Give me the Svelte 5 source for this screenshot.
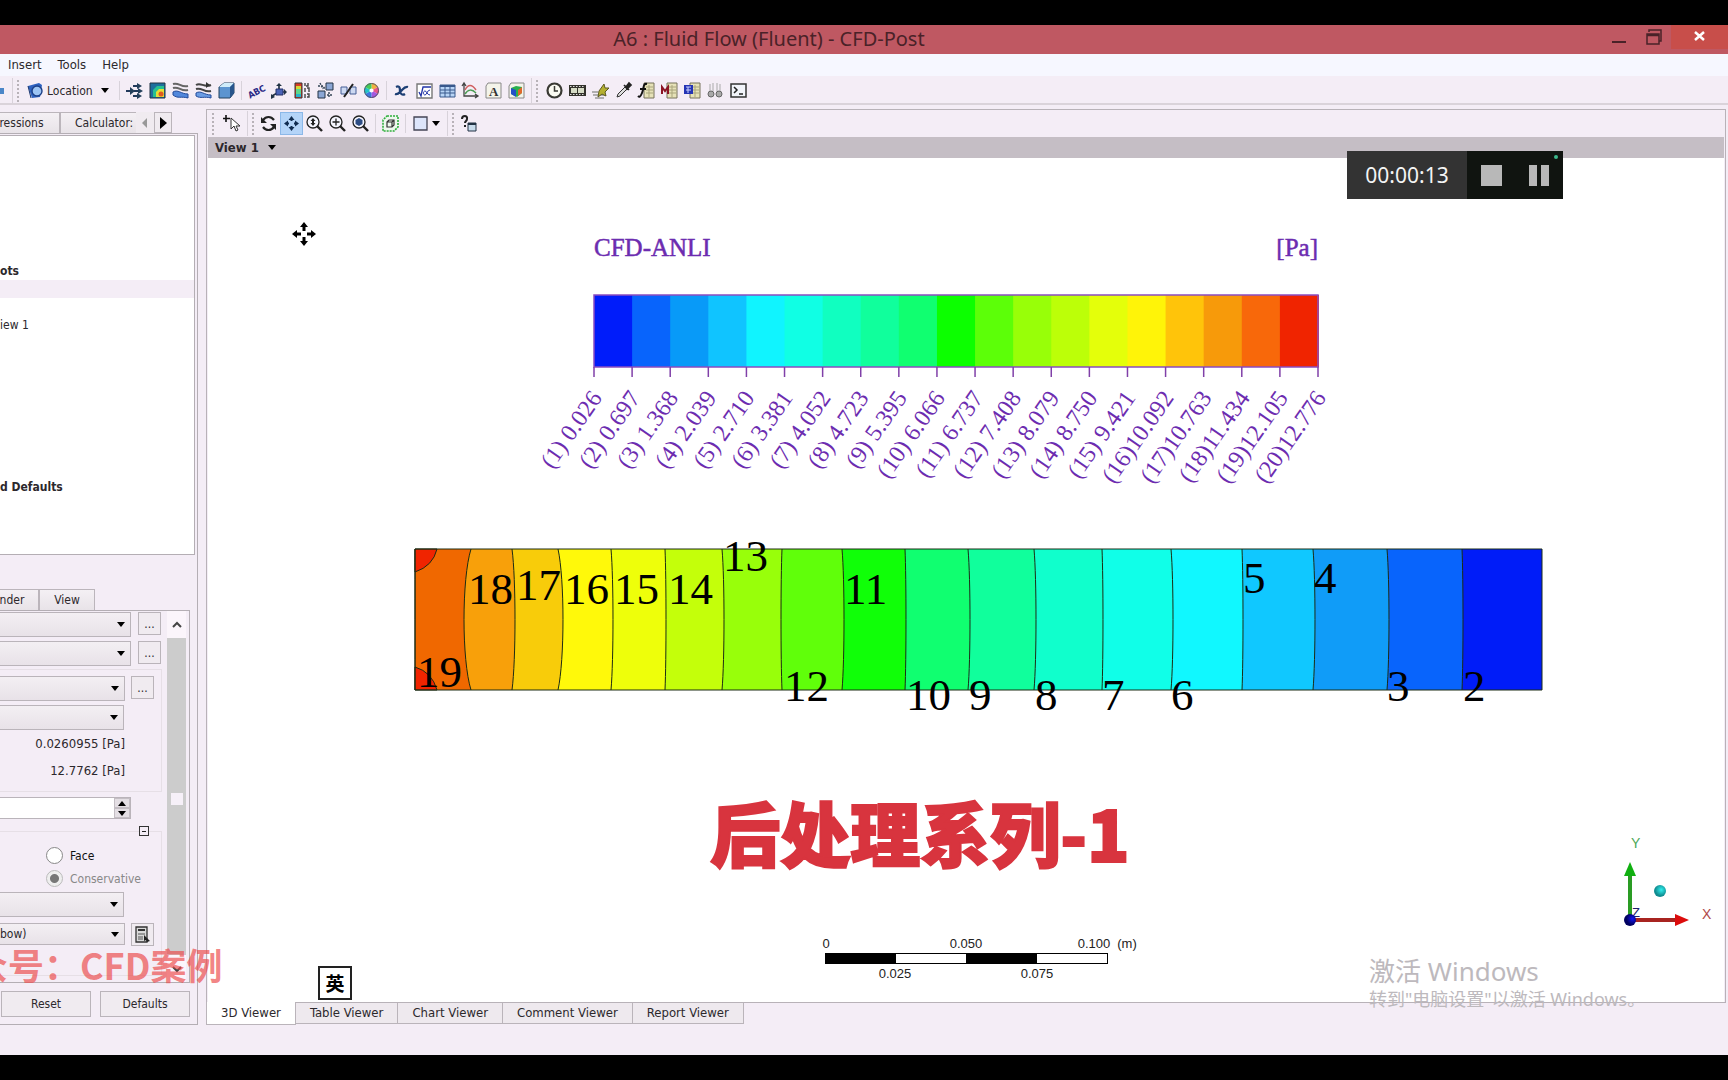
<script>
  const legendColors = [
    '#001cfa', '#0864fc', '#089af8', '#10c4ff', '#10f4ff', '#10ffe4', '#10ffc0', '#10ff9c', '#10ff70', '#0cff00',
    '#5cff08', '#98ff08', '#bcff08', '#e4ff0a', '#fff408', '#ffc40a', '#f79a0a', '#f8680a', '#f02400'
  ];
  const legendLabels = [
    '(1) 0.026', '(2) 0.697', '(3) 1.368', '(4) 2.039', '(5) 2.710', '(6) 3.381', '(7) 4.052', '(8) 4.723',
    '(9) 5.395', '(10) 6.066', '(11) 6.737', '(12) 7.408', '(13) 8.079', '(14) 8.750', '(15) 9.421',
    '(16)10.092', '(17)10.763', '(18)11.434', '(19)12.105', '(20)12.776'
  ];
  const legendX = 386;
  const legendStep = 724 / 19;

  // Duct section: each band runs from its own iso-line to the right wall and is overlaid by the next.
  const top = 391;
  const bottom = 532;
  const right = 1334;
  const bands = [
    { x: 207, mid: 207, color: '#f06800' },
    { x: 263, mid: 256, color: '#f8a00a' },
    { x: 304, mid: 307, color: '#f8cc0a' },
    { x: 350, mid: 355, color: '#fff90a' },
    { x: 403, mid: 405, color: '#eeff0a' },
    { x: 457, mid: 458, color: '#c4ff0a' },
    { x: 514, mid: 516, color: '#98ff0a' },
    { x: 574, mid: 573, color: '#60ff0a' },
    { x: 634, mid: 636, color: '#10ff08' },
    { x: 697, mid: 698, color: '#10ff70' },
    { x: 760, mid: 762, color: '#10ff9c' },
    { x: 826, mid: 828, color: '#10ffcc' },
    { x: 894, mid: 895, color: '#10ffe8' },
    { x: 963, mid: 965, color: '#10f8ff' },
    { x: 1034, mid: 1035, color: '#10c8ff' },
    { x: 1105, mid: 1107, color: '#109cf8' },
    { x: 1179, mid: 1181, color: '#0864fc' },
    { x: 1254, mid: 1255, color: '#001cf8' }
  ];
  const isoLine = (b) => {
    const c = (b.mid - b.x / 4) / 0.75;
    return `M${b.x} ${top}C${c} ${top + 30} ${c} ${bottom - 30} ${b.x} ${bottom}`;
  };
  const numbers = [
    ['19', 209, 529], ['18', 260, 446], ['17', 308, 442], ['16', 356, 446], ['15', 406, 446], ['14', 460, 446],
    ['13', 515, 413], ['12', 576, 543], ['11', 636, 446], ['10', 698, 552], ['9', 761, 552], ['8', 827, 552],
    ['7', 894, 552], ['6', 963, 552], ['5', 1035, 435], ['4', 1106, 435], ['3', 1179, 543], ['2', 1255, 543]
  ];

  const page = '<path d="M3 1h13v15H1V4z" fill="#f4f4ea" stroke="#888"/>';
  const sheet = '<path d="M6 1h10v15H6z" fill="#e6e2b8" stroke="#77735a"/><path d="M8 5h7M8 8h7M8 11h7M11 3v12" stroke="#a9a57c"/>';
  const lens = '<circle cx="7" cy="7" r="6" fill="#f6f6ff" stroke="#222" stroke-width="1.3"/><path d="M11 11l5 5" stroke="#222" stroke-width="2.4"/>';
  const icons = {
    location: '<path d="M1 4l11-3 3 2-2 12-8 1z" fill="#2e62c0"/><path d="M1 4l3 12" stroke="#17346e"/><circle cx="10" cy="9" r="5" fill="#9cc4f4" stroke="#1c3f86" stroke-width="1.4"/>',
    vector: '<path d="M0 9h5M7 4h5M8 9h5M7 14h5" stroke="#223a5c" stroke-width="1.800"/><path d="M4 5l5 4-5 4zM11 1l5 3-5 3zM12 6l5 3-5 3zM11 11l5 3-5 3z" fill="#24405c"/>',
    contour: '<path d="M1 1h15v15H1z" fill="#1d6f9c" stroke="#234"/><path d="M4 15V8l4-4h7v11z" fill="#27c190"/><path d="M7 15v-5l3-3h5v8z" fill="#e6df36"/><circle cx="12" cy="12" r="2.500" fill="#e05a20"/>',
    stream: '<path d="M1 2c6-2 8 4 15 2M1 6c6-2 8 4 15 2" stroke="#666" stroke-width="2" fill="none"/><path d="M1 10c5-3 8 2 15 2v4C9 14 6 17 1 13z" fill="#5288dc" stroke="#234b9a"/>',
    track: '<path d="M1 3c5-3 8 3 15 0M1 7c6-2 8 4 15 2" stroke="#444" stroke-width="2" fill="none"/><path d="M11 0l4 3-4 3z" fill="#333"/><path d="M1 11c5-3 8 2 15 2v3C9 14 6 17 1 14z" fill="#6a9ce4" stroke="#234b9a"/>',
    volume: '<path d="M1 5l5-4h10v10l-4 5H1z" fill="#5c94d0" stroke="#24435f"/><path d="M1 5l5-4h10l-4 4z" fill="#d0ecfa"/><path d="M12 5l4-4v10l-4 5z" fill="#28558c"/>',
    abc: '<text x="-1" y="13" transform="rotate(-28 8 9)" font-size="9" font-weight="700" font-family="DejaVu Sans Condensed, sans-serif" fill="#2a2a86">ABC</text>',
    axis: '<path d="M8 2v8M8 10h7M8 10l-7 4" stroke="#234" stroke-width="1.700"/><path d="M5 7h7v6H5z" fill="#4b63b8" stroke="#223068"/><path d="M5 4l3-3 3 3zM13 7l3 3-3 3zM0 12l4 3-4 2z" fill="#234"/>',
    legend: '<path d="M1 1h7v15H1z" fill="#d83a24" stroke="#333"/><path d="M2 4h5v4H2z" fill="#d6d836"/><path d="M2 7h5v5H2z" fill="#5cd88c"/><path d="M2 12h5v3H2z" fill="#24b4cc"/><path d="M11 1v3M14 1v3h-2M11 6v4M13 6h2v4M11 12v4M13 12h2v3h-2" stroke="#444" fill="none" stroke-width="1.400"/>',
    instance: '<path d="M9 1h7v7H9z" fill="#8ba6d4" stroke="#234"/><path d="M1 9h7v7H1z" fill="#8ba6d4" stroke="#234"/><path d="M1 4h5l2 3M3 1l3 6M10 13h5M12 10v5" stroke="#345" stroke-width="1.400" fill="none" stroke-dasharray="2 1"/>',
    clip: '<path d="M1 5h6v7H1zM10 5h6v7h-6z" fill="#cdd9f2" stroke="#445c94"/><path d="M4 15L13 2" stroke="#222" stroke-width="2"/>',
    wheel: '<path d="M8.500 8.500V1A7.500 7.500 0 0 1 15 5z" fill="#f0b040"/><path d="M8.500 8.500L15 5a7.500 7.500 0 0 1 0 7z" fill="#e8568c"/><path d="M8.500 8.500L15 12a7.500 7.500 0 0 1-6.500 4z" fill="#a458e0"/><path d="M8.500 8.500V16A7.500 7.500 0 0 1 2 12z" fill="#3d78e0"/><path d="M8.500 8.500L2 12a7.500 7.500 0 0 1 0-7z" fill="#22c4c8"/><path d="M8.500 8.500L2 5a7.500 7.500 0 0 1 6.500-4z" fill="#46cc58"/><circle cx="8.500" cy="8.500" r="2" fill="#fff"/><circle cx="8.500" cy="8.500" r="7" fill="none" stroke="#556"/>',
    variable: '<path d="M3 5c4-2 4 2 4 4s2 5 5 3M15 5c-3-1-5 2-7 4s-3 4-6 3" stroke="#1d3f74" stroke-width="2.300" fill="none"/>',
    expression: '<path d="M1 2h15v14H1z" fill="#fff" stroke="#777" stroke-width="1.400"/><path d="M3 10l2 4 2-9h8" stroke="#2234a8" fill="none" stroke-width="1.300"/><path d="M14 8c-3 0-3 5-5 5-2 0-2-4 0-4 2 0 2 4 5 4" stroke="#2234a8" fill="none"/>',
    table: '<path d="M1 3h15v12H1z" fill="#b8d4f6" stroke="#39588c"/><path d="M1 4h15" stroke="#39588c" stroke-width="2"/><path d="M1 8h15M1 11h15M6 3v12M11 3v12" stroke="#39588c"/>',
    chart: '<path d="M2 1v13h14M0 4l2-3 2 3M13 12l3 2-3 2" stroke="#444" fill="none" stroke-width="1.300"/><path d="M3 8c3-6 7-6 11 0" stroke="#d06060" fill="none" stroke-width="1.500"/><path d="M3 12c3-5 7-5 11-1" stroke="#4c9c54" fill="none" stroke-width="1.500"/>',
    comment: page + '<text x="4" y="14" font-size="13" font-weight="700" font-family="Liberation Serif, serif" fill="#333">A</text>',
    figure: page + '<path d="M3 6l5-2 6 1v6l-5 4-6-3z" fill="#28b04c"/><path d="M3 6l5 2v7l-5-3z" fill="#2450c8"/><path d="M10 8l4-3v6l-4 3z" fill="#e0682c"/>',
    clock: '<circle cx="8.500" cy="8.500" r="7" fill="#fbfbf2" stroke="#3a3a34" stroke-width="2.200"/><path d="M8.500 4v5H12" stroke="#3a3a34" fill="none" stroke-width="1.500"/>',
    film: '<path d="M0 3h17v11H0z" fill="#33332c"/><path d="M2 6h6v5H2zM9 6h6v5H9z" fill="#d6dcc6"/><path d="M1 4.500h15M1 12.500h15" stroke="#ddd" stroke-dasharray="1.500 1.500"/>',
    quick: '<path d="M1 13h12M3 16h9M0 10h6" stroke="#999" stroke-width="1.500"/><path d="M7 9l5-7 1 4 4 0-4 4 1 4-4-2-4 3z" fill="#b5b030" stroke="#5c5a22"/>',
    probe: '<path d="M2 15l1-3 7-7 2 2-7 7z" fill="#ddd" stroke="#333"/><path d="M9 3l5 5M11 5l3-4 2 2-4 4z" stroke="#222" stroke-width="1.700" fill="#222"/>',
    func: sheet + '<path d="M9 2C5 1 6 6 4 11S1 15 0 14M2 7h6" stroke="#111" stroke-width="2" fill="none"/>',
    macro: sheet + '<path d="M1 12V5l3 4 3-4v7" stroke="#8c1424" stroke-width="2" fill="none"/>',
    report: sheet + '<path d="M0 3h9v9H0z" fill="#2434b4"/><path d="M2 5h5M2 8h5M4 5v6" stroke="#c8d0ff"/>',
    compare: '<circle cx="4" cy="12" r="3" fill="#aaa" stroke="#666"/><circle cx="12" cy="12" r="3" fill="#aaa" stroke="#666"/><path d="M3 2v7M6 1v8M10 1v8M13 2v7" stroke="#aaa"/>',
    console: '<path d="M1 2h15v13H1z" fill="#f2f4fa" stroke="#333" stroke-width="1.500"/><path d="M4 5l3 3-3 3M9 12h4" stroke="#222" fill="none" stroke-width="1.500"/>',
    pick: '<path d="M3 0v7M0 3.500h7" stroke="#111" stroke-width="1.600"/><path d="M8 3v11l3-3 2 5 2-1-2-4h4z" fill="#fff" stroke="#333"/>',
    rotate: '<path d="M3 5c3-4 8-4 11 0M14 12c-3 4-8 4-11 0" stroke="#222" stroke-width="2.200" fill="none"/><path d="M1 2v6h6zM16 15V9h-6z" fill="#222"/>',
    pan: '<path d="M8.500 3v3M8.500 11v3M3 8.500h3M11 8.500h3" stroke="#112c50" stroke-width="2"/><path d="M5.500 5l3-4 3 4zM5.500 12l3 4 3-4zM5 5.500l-4 3 4 3zM12 5.500l4 3-4 3z" fill="#112c50"/>',
    zoom: lens + '<path d="M4.500 6L7 3l2.500 3zM4.500 8L7 11l2.500-3z" fill="#222"/><path d="M7 5v4" stroke="#222" stroke-width="2"/>',
    zoomIn: lens + '<path d="M3.500 7h7M7 3.500v7" stroke="#222" stroke-width="1.300"/>',
    zoomBox: lens + '<path d="M3.500 5L7 3l3.500 2v4L7 11 3.500 9z" fill="#2d4c84"/>',
    fit: '<path d="M5 1h11v11l-4 4H1V5z" fill="#eef8ee" stroke="#2fae3c" stroke-width="1.600" stroke-dasharray="2 1"/><path d="M5 7l2-2h5v5l-2 2H5zM5 7h5v5M10 7l2-2" fill="none" stroke="#333" stroke-width="1.200"/>',
    square: '<path d="M2 2h13v13H2z" fill="#dde5fb" stroke="#445" stroke-width="1.300"/>',
    help: '<path d="M2 4c0-4 6-4 5 0 0 2-2 2-2 4M5 10v2" stroke="#222" stroke-width="2" fill="none"/><path d="M8 8h8v8H8z" fill="#c8dcec" stroke="#234"/><path d="M8 9h8" stroke="#234" stroke-width="2"/>',
    calc: '<path d="M2 1h11v15H2z" fill="#d9d9d9" stroke="#333" stroke-width="1.300"/><path d="M4 4h7" stroke="#333" stroke-width="2"/><path d="M4 8h7M4 11h5M4 13h5" stroke="#555"/><path d="M10 9v6l2-1 1 2 3-1-3-3z" fill="#222"/>'
  };

  const insertTools = [
    ['vector', 'contour', 'stream', 'track', 'volume'],
    ['abc', 'axis', 'legend', 'instance', 'clip', 'wheel'],
    ['variable', 'expression', 'table', 'chart', 'comment', 'figure']
  ];
  const extraTools = ['clock', 'film', 'quick', 'probe', 'func', 'macro', 'report', 'compare', 'console'];
  const tree = Array.from({ length: 20 }, () => ({ text: '' }));
  tree[7] = { text: 'ots', bold: true };
  tree[8] = { text: '', selected: true };
  tree[10] = { text: 'iew 1' };
  tree[19] = { text: 'd Defaults', bold: true };
  const viewerTabs = ['3D Viewer', 'Table Viewer', 'Chart Viewer', 'Comment Viewer', 'Report Viewer'];
</script>

{#snippet icon(name)}
  <svg class="icon" viewBox="0 0 17 17" aria-hidden="true">{@html icons[name]}</svg>
{/snippet}

{#snippet tool(name, active = false)}
  <button class="tool" class:active aria-label={name}>{@render icon(name)}</button>
{/snippet}

{#snippet combo(label, value = '')}
  <span class="combo"><select aria-label={label}><option>{value}</option></select></span>
{/snippet}

<div class="screen">
  <header class="title">
    <h1>A6 : Fluid Flow (Fluent) - CFD-Post</h1>
    <div class="window-buttons">
      <button aria-label="Minimize"><svg viewBox="0 0 16 16"><path d="M1 13h14" stroke="#4a2228" stroke-width="2" /></svg></button>
      <button aria-label="Restore"><svg viewBox="0 0 16 16"><path d="M1 5h12v10H1zM1 6.500h12M3 3V1h12v11h-2" fill="none" stroke="#4a2228" stroke-width="1.500" /></svg></button>
      <button class="close" aria-label="Close"><svg viewBox="0 0 16 16"><path d="M3 3l9 8M12 3l-9 8" stroke="#fff" stroke-width="2.500" /></svg></button>
    </div>
  </header>

  <nav class="menu">
    <button>Insert</button><button>Tools</button><button>Help</button>
  </nav>

  <div class="toolbar">
    <span class="undo"></span>
    <i class="sep tall"></i><i class="grip"></i>
    <button class="location">{@render icon('location')}<span>Location</span><i class="down"></i></button>
    {#each insertTools as group}
      <i class="sep"></i>
      {#each group as name}{@render tool(name)}{/each}
    {/each}
    <i class="sep tall"></i><i class="grip wide"></i>
    {#each extraTools as name}{@render tool(name)}{/each}
  </div>

  <main>
    <aside>
      <div class="tabs outline-tabs">
        <button class="tab first">ressions</button>
        <button class="tab calculators">Calculator:</button>
        <button class="scroll-tab" aria-label="Previous tabs"><svg viewBox="0 0 16 16"><path d="M10 3v10L5 8z" fill="#999" /></svg></button>
        <button class="scroll-tab next" aria-label="Next tabs"><svg viewBox="0 0 16 16"><path d="M5 2v12l7-6z" fill="#000" /></svg></button>
      </div>
      <div class="panel">
        <ul class="tree">
          {#each tree as row}
            <li class:bold={row.bold} class:selected={row.selected}>{row.text}</li>
          {/each}
        </ul>

        <div class="tabs detail-tabs">
          <button class="tab render">nder</button>
          <button class="tab view">View</button>
        </div>
        <div class="details">
          <div class="form">
            <div class="row">{@render combo('Domains')}<button class="more">...</button></div>
            <div class="row">{@render combo('Locations')}<button class="more">...</button></div>
            <div class="group">
              <div class="row">{@render combo('Variable')}<button class="more">...</button></div>
              <div class="row short">{@render combo('Range')}</div>
              <p>0.0260955 [Pa]</p>
              <p>12.7762 [Pa]</p>
            </div>
            <div class="spin">
              <input aria-label="Number of contours" />
              <div class="spin-buttons"><button aria-label="Increase"><i class="up"></i></button><button aria-label="Decrease"><i class="down"></i></button></div>
            </div>
            <div class="group advanced">
              <button class="collapse" aria-label="Collapse"></button>
              <label><input type="radio" name="boundary" />Face</label>
              <label class="disabled"><input type="radio" name="values" checked disabled />Conservative</label>
              <div class="row short">{@render combo('Color scale')}</div>
              <div class="row low">{@render combo('Color map', 'bow)')}<button class="more image" aria-label="Edit color map">{@render icon('calc')}</button></div>
            </div>
          </div>
          <div class="scrollbar">
            <button aria-label="Scroll up"><svg viewBox="0 0 16 16"><path d="M4 10l4-4 4 4" fill="none" stroke="#444" stroke-width="2" /></svg></button>
            <div class="track"><i></i></div>
            <button aria-label="Scroll down"><svg viewBox="0 0 16 16"><path d="M4 6l4 4 4-4" fill="none" stroke="#444" stroke-width="2" /></svg></button>
          </div>
        </div>
        <div class="actions"><button>Reset</button><button>Defaults</button></div>
        <div class="watermark">众号：CFD案例</div>
      </div>
    </aside>

    <section class="viewer">
      <div class="frame">
        <div class="view-tools">
          <i class="grip"></i><span class="pad">{@render tool('pick')}</span>
          <i class="sep tall"></i><i class="grip"></i>
          {@render tool('rotate')}{@render tool('pan', true)}{@render tool('zoom')}{@render tool('zoomIn')}{@render tool('zoomBox')}
          <i class="sep"></i>{@render tool('fit')}<i class="sep"></i>
          {@render tool('square')}<i class="down spaced"></i>
          <i class="sep tall"></i><i class="grip"></i>{@render tool('help')}
        </div>
        <button class="view-bar">View 1<i class="down"></i></button>
        <div class="scene">
          <svg class="plot" viewBox="0 0 1516 844" role="img" aria-label="Pressure contour">
            <g class="legend">
              <text class="heading" x="386" y="98">CFD-ANLI</text>
              <text class="heading" x="1110" y="98" text-anchor="end">[Pa]</text>
              {#each legendColors as color, i}
                <rect x={legendX + i * legendStep} y="137" width={legendStep + 1} height="72" fill={color} />
              {/each}
              <rect x="386" y="137" width="724" height="72" fill="none" stroke="#8a4cc0" stroke-width="1.500" />
              {#each legendLabels as label, i}
                <path d="M{legendX + i * legendStep} 209v10" stroke="#8040a8" stroke-width="1.500" />
                <text text-anchor="end" transform="translate({legendX + 9 + i * legendStep} 240) rotate(-55)">{label}</text>
              {/each}
            </g>

            <g class="duct">
              {#each bands as band}
                <path d="{isoLine(band)}H{right}V{top}Z" fill={band.color} />
                <path class="line" d={isoLine(band)} />
              {/each}
              <path class="line hot" d="M207 391H229Q225 408 207 414Z" />
              <path class="line hot" d="M207 532H229Q224 514 207 509Z" />
              <path class="line" d="M207 391H1334V532H207Z" />
              {#each numbers as [n, x, y]}
                <text {x} {y}>{n}</text>
              {/each}
            </g>

            <g class="scale">
              <rect x="617.500" y="795.500" width="282" height="10" fill="#fff" stroke="#000" />
              <path d="M617 795h71v11h-71zM758 795h71v11h-71z" />
              <text x="618" y="790">0</text>
              <text x="758" y="790">0.050</text>
              <text x="886" y="790">0.100</text>
              <text x="919" y="790">(m)</text>
              <text x="687" y="820">0.025</text>
              <text x="829" y="820">0.075</text>
            </g>

            <g class="triad">
              <defs>
                <radialGradient id="cyan-ball" cx=".6" cy=".4"><stop offset="0" stop-color="#30f0f0" /><stop offset="1" stop-color="#108c90" /></radialGradient>
                <radialGradient id="blue-ball" cx=".7" cy=".4"><stop offset="0" stop-color="#1414f0" /><stop offset="1" stop-color="#000060" /></radialGradient>
              </defs>
              <path d="M1422 762V712" stroke="#2a9c24" stroke-width="4" />
              <path d="M1416 718l6-14 6 14z" fill="#10b010" />
              <path d="M1422 762h46" stroke="#a82420" stroke-width="4" />
              <path d="M1467 756l14 6-14 6z" fill="#dc0c0c" />
              <text class="small" x="1424" y="759" fill="#20206c">Z</text>
              <circle cx="1422" cy="762" r="6" fill="url(#blue-ball)" />
              <circle cx="1452" cy="733" r="6" fill="url(#cyan-ball)" />
              <text x="1423" y="690" fill="#4ca858">Y</text>
              <text x="1494" y="761" fill="#b04848">X</text>
            </g>
          </svg>

          <svg class="move-cursor" viewBox="0 0 24 24" aria-hidden="true"><path d="M12 0l4 5h-2.500v4h-3V5H8zM12 24l-4-5h2.500v-4h3v4H16zM0 12l5-4v2.500h4v3H5V16zM24 12l-5 4v-2.500h-4v-3h4V8z" /></svg>
          <div class="recorder">
            <time>00:00:13</time>
            <button aria-label="Stop"><i class="stop"></i></button>
            <button aria-label="Pause"><i class="bar"></i><i class="bar"></i><i class="dot"></i></button>
          </div>
          <div class="caption">后处理系列-1</div>
          <div class="ime">英</div>
          <div class="activate"><strong>激活 Windows</strong><span>转到"电脑设置"以激活 Windows。</span></div>
        </div>
      </div>
      <div class="viewer-tabs">
        {#each viewerTabs as name, i}
          <button class:current={i === 0}>{name}</button>
        {/each}
      </div>
    </section>
  </main>
</div>

<style>
  :global(body) { background: #000; }
  * { box-sizing: border-box; }
  button, input, select { font: inherit; color: inherit; margin: 0; padding: 0; border: 0; background: none; border-radius: 0; }
  button { display: flex; align-items: center; justify-content: center; white-space: nowrap; }
  svg { display: block; flex: none; }

  .screen {
    display: flex; flex-direction: column; min-height: 100vh; padding: 25px 0; background: #f4edf6;
    background-clip: content-box; color: #2c282c; overflow: hidden;
    font: 12px/18px "DejaVu Sans Condensed", "Noto Sans", "Noto Sans CJK SC", sans-serif;
  }
  .title { display: grid; grid-template-columns: 1fr auto 1fr; height: 29px; background: #bf5862; }
  .title h1 {
    grid-column: 1 / 4; grid-row: 1; margin: 0; padding-right: 190px; text-align: center; color: #4a2228;
    font: 400 20px/28px "Noto Sans", sans-serif;
  }
  .window-buttons { grid-column: 3; grid-row: 1; display: flex; justify-content: flex-end; }
  .window-buttons button { width: 35px; height: 24px; }
  .window-buttons svg { width: 16px; height: 16px; }
  .window-buttons .close { width: 57px; background: #c84e4a; }

  .menu { display: flex; gap: 16px; height: 22px; padding: 0 8px; background: #f6f7ff; font-size: 13px; }
  .toolbar { display: flex; align-items: center; height: 29px; margin-bottom: 4px; padding-top: 2px; border-bottom: 2px solid #dad3da; }
  .undo { width: 4px; height: 6px; margin-right: 5px; background: #4b86c8; }
  .icon { width: 17px; height: 17px; overflow: visible; }
  .tool { width: 23px; height: 23px; flex: none; }
  .tool.active { background: #b4d4f8; border: 1px solid #8cb8e8; }
  .sep { width: 1px; height: 19px; margin: 0 3px; background: #d8d2da; flex: none; }
  .sep.tall { height: 25px; }
  .grip { width: 2px; height: 22px; margin: 0 3px 0 1px; flex: none; background: repeating-linear-gradient(#b8b2b8 0 2px, transparent 2px 4px); }
  .grip.wide { margin-right: 5px; }
  .location { gap: 3px; width: 94px; padding: 0 7px 0 5px; justify-content: flex-start; flex: none; }
  .location .down { margin-left: auto; }
  .down, .up { width: 0; height: 0; flex: none; border: 4px solid transparent; border-top: 5px solid #000; border-bottom: 0; }
  .down.spaced { margin-right: 4px; }
  .up { border-top: 0; border-bottom: 5px solid #000; }

  main { display: flex; flex: 1; gap: 8px; padding: 0 2px 0 0; margin-bottom: 30px; }
  aside { width: 198px; flex: none; display: flex; flex-direction: column; padding-top: 3px; }
  .tabs { display: flex; height: 21px; }
  .tab { border: 1px solid #bbb5bb; border-bottom: 0; background: linear-gradient(#f4f0f4, #e8e3e8); overflow: hidden; }
  .outline-tabs .first { width: 60px; padding-right: 16px; border-left: 0; }
  .outline-tabs .calculators { width: 76px; padding-left: 14px; border-right: 0; justify-content: flex-start; }
  .scroll-tab { width: 18px; background: #f0ebf0; }
  .scroll-tab svg { width: 16px; height: 16px; }
  .scroll-tab.next { border: 1px solid #bbb5bb; }

  .panel {
    position: relative; flex: 1; display: flex; flex-direction: column;
    border: solid #b4aeb4; border-width: 1px 1px 1px 0; padding-top: 1px;
  }
  .tree { flex: 1; margin: 0 2px 34px 0; padding: 0; list-style: none; background: #fff; border: solid #b4aeb4; border-width: 1px 1px 1px 0; }
  .tree li { height: 18px; white-space: nowrap; }
  .tree .bold { font-weight: 700; }
  .tree .selected { background: #f4edf6; }
  .detail-tabs .render { width: 39px; padding-right: 14px; border-left: 0; }
  .detail-tabs .view { width: 56px; }

  .details { display: flex; height: 373px; margin-right: 7px; border: solid #b4aeb4; border-width: 1px 1px 1px 0; }
  .form { width: 167px; padding-top: 1px; }
  .row { display: flex; gap: 7px; width: 161px; height: 25px; margin-bottom: 4px; }
  .combo { position: relative; flex: 1; }
  .combo select {
    width: 100%; height: 100%; appearance: none; border: 1px solid #bab4ba; border-left: 0;
    background: linear-gradient(#f3eff3, #e8e2e8);
  }
  .combo::after { content: ''; position: absolute; right: 6px; top: 10px; border: 4px solid transparent; border-top: 5px solid #000; border-bottom: 0; }
  .more { width: 23px; height: 23px; border: 1px solid #bab4ba; background: #f0ebf0; }
  .group { width: 162px; margin-top: -1px; padding: 6px 7px 7px 0; border: solid #e6dfe6; border-width: 1px 1px 1px 0; }
  .group .row { width: auto; gap: 6px; }
  .group .short { padding-right: 30px; margin-bottom: 0; }
  .group p { margin: 0; padding-right: 29px; font-size: 13px; line-height: 27px; text-align: right; }
  .spin { display: flex; width: 131px; height: 22px; margin-top: 5px; border: 1px solid #bab4ba; border-left: 0; background: #fff; }
  .spin input { width: 114px; flex: 1; min-width: 0; background: #fff; }
  .spin-buttons { width: 16px; display: flex; flex-direction: column; background: #e4dfe4; }
  .spin-buttons button { flex: 1; border: 1px solid #c4bec4; }
  .group.advanced { position: relative; margin-top: 12px; padding: 12px 7px 26px 0; }
  .advanced .short { margin: 2px 0 6px; }
  .collapse { position: absolute; right: 12px; top: -6px; width: 10px; height: 10px; border: 1px solid #333; background: #f4edf6; }
  .collapse::before { content: ''; width: 4px; height: 1px; background: #222; }
  label { display: flex; align-items: center; gap: 7px; height: 23px; padding-left: 46px; color: #111; }
  label input { appearance: none; width: 17px; height: 17px; flex: none; border: 1px solid #888; border-radius: 50%; background: #fff; }
  label.disabled { color: #888; }
  label.disabled input { border-color: #bbb; background: radial-gradient(circle, #777 0 4px, #eee 5px); }
  .group .low { height: 22px; }
  .low .combo::after { top: 9px; }
  .scrollbar { width: 19px; display: flex; flex-direction: column; }
  .scrollbar button { height: 27px; background: #fbf5fb; }
  .scrollbar svg { width: 16px; height: 16px; }
  .track { flex: 1; padding-top: 155px; background: #ccc; }
  .track i { display: block; width: 12px; height: 12px; margin: 0 auto; background: #f6f0f8; }
  .actions { display: flex; gap: 9px; padding: 8px 7px 7px 1px; }
  .actions button { flex: 1; height: 26px; border: 1px solid #bab4ba; background: #f0ebf0; }
  .watermark {
    position: absolute; z-index: 2; left: -28px; bottom: 36px; white-space: nowrap; color: rgb(236 72 72 / .68);
    font: 700 36px/48px "Noto Sans CJK SC", sans-serif;
  }

  .viewer { flex: 1; min-width: 0; display: flex; flex-direction: column; }
  .frame { flex: 1; display: flex; flex-direction: column; padding: 0 1px; border: 1px solid #b8b2b8; }
  .view-tools { display: flex; align-items: center; height: 27px; padding-left: 3px; }
  .pad { padding: 0 1px 0 3px; }
  .view-bar { justify-content: flex-start; gap: 9px; height: 21px; padding-left: 7px; background: #c5bec5; font-size: 13px; font-weight: 700; }
  .scene { position: relative; flex: 1; display: grid; background: #fff; }
  .plot { width: 100%; height: 100%; }
  .legend text { font: 24px "Liberation Serif", serif; fill: #6c2cb0; }
  .legend .heading { font-size: 25px; stroke: #6c2cb0; stroke-width: .5px; }
  .duct text { font: 45px "Liberation Serif", serif; fill: #000; }
  .line { fill: none; stroke: #1c2c14; stroke-width: 1px; }
  .hot { fill: #f02400; }
  .scale text { font: 13px "Liberation Sans", sans-serif; text-anchor: middle; fill: #222; }
  .triad text { font: 14px "Liberation Sans", sans-serif; }
  .triad .small { font-size: 13px; }

  .move-cursor { position: absolute; left: 84px; top: 64px; width: 24px; height: 24px; }
  .recorder { position: absolute; right: 161px; top: -7px; display: flex; height: 48px; background: #101410; }
  .recorder time { width: 120px; text-align: center; background: #333; color: #f4f4f4; font: 21px/48px "Noto Sans", sans-serif; }
  .recorder button { position: relative; width: 48px; gap: 4px; }
  .stop { width: 21px; height: 21px; background: #b8b8b8; }
  .bar { width: 8px; height: 21px; background: #b8b8b8; }
  .dot { position: absolute; right: 5px; top: 4px; width: 4px; height: 4px; border-radius: 50%; background: #3cb88c; }
  .caption {
    position: absolute; left: 0; right: 92px; bottom: 120px; text-align: center; color: #d8343e;
    font: 900 70px/100px "Noto Sans CJK SC", sans-serif; -webkit-text-stroke: 2px #d8343e;
  }
  .ime {
    position: absolute; left: 110px; bottom: 2px; width: 34px; height: 34px; border: 2px solid #222; background: #fff;
    color: #000; text-align: center; font: 700 19px/30px "Noto Sans CJK SC", sans-serif;
  }
  .activate {
    position: absolute; left: 1161px; bottom: -10px; display: flex; flex-direction: column; white-space: nowrap;
    color: #bdb9bd; font: 18px/26px "Noto Sans", "Noto Sans CJK SC", sans-serif;
  }
  .activate strong { font-weight: 400; font-size: 26px; line-height: 30px; }
  .viewer-tabs { display: flex; align-items: flex-start; height: 22px; font-size: 13px; }
  .viewer-tabs button { height: 21px; padding: 0 14px; border: 1px solid #bab4ba; border-top: 0; border-left: 0; background: #eee9ee; }
  .viewer-tabs .current { height: 23px; margin-top: -1px; border-left: 1px solid #bab4ba; background: #fff; }
</style>
